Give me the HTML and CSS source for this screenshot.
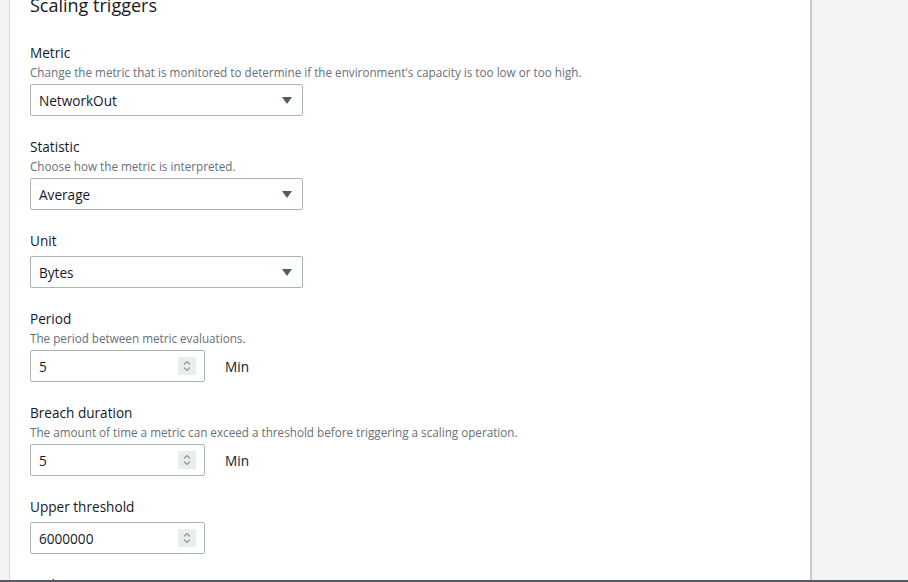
FILE: index.html
```html
<!DOCTYPE html>
<html lang="en">
<head>
<meta charset="utf-8">
<title>Scaling triggers</title>
<link rel="stylesheet" href="styles.css">
</head>
<body>
<div class="page">
  <div class="gutter"></div>
  <main class="panel">
    <h2 class="title">Scaling triggers</h2>

    <div class="field">
      <div class="label">Metric</div>
      <div class="desc">Change the metric that is monitored to determine if the environment's capacity is too low or too high.</div>
      <div class="select"><span>NetworkOut</span><svg class="caret" width="10" height="7" viewBox="0 0 10 7"><path d="M0 0h10L5 7z" fill="#545b64"/></svg></div>
    </div>

    <div class="field">
      <div class="label">Statistic</div>
      <div class="desc">Choose how the metric is interpreted.</div>
      <div class="select"><span>Average</span><svg class="caret" width="10" height="7" viewBox="0 0 10 7"><path d="M0 0h10L5 7z" fill="#545b64"/></svg></div>
    </div>

    <div class="field">
      <div class="label">Unit</div>
      <div class="select"><span>Bytes</span><svg class="caret" width="10" height="7" viewBox="0 0 10 7"><path d="M0 0h10L5 7z" fill="#545b64"/></svg></div>
    </div>

    <div class="field">
      <div class="label">Period</div>
      <div class="desc">The period between metric evaluations.</div>
      <div class="row">
        <div class="number"><span>5</span><span class="spin"><svg width="18" height="18" viewBox="0 0 18 18"><path d="M6 7.5 9 4.5 12 7.5M6 10.5 9 13.5 12 10.5" fill="none" stroke="#879596" stroke-width="1.2"/></svg></span></div>
        <span class="unit">Min</span>
      </div>
    </div>

    <div class="field">
      <div class="label">Breach duration</div>
      <div class="desc">The amount of time a metric can exceed a threshold before triggering a scaling operation.</div>
      <div class="row">
        <div class="number"><span>5</span><span class="spin"><svg width="18" height="18" viewBox="0 0 18 18"><path d="M6 7.5 9 4.5 12 7.5M6 10.5 9 13.5 12 10.5" fill="none" stroke="#879596" stroke-width="1.2"/></svg></span></div>
        <span class="unit">Min</span>
      </div>
    </div>

    <div class="field">
      <div class="label">Upper threshold</div>
      <div class="row">
        <div class="number"><span>6000000</span><span class="spin"><svg width="18" height="18" viewBox="0 0 18 18"><path d="M6 7.5 9 4.5 12 7.5M6 10.5 9 13.5 12 10.5" fill="none" stroke="#879596" stroke-width="1.2"/></svg></span></div>
      </div>
    </div>

    <div class="field">
      <div class="label">Scale up increment</div>
    </div>
  </main>
  <div class="aside"></div>
</div>
<div class="footer"></div>
</body>
</html>
```

FILE: styles.css
```css
* { box-sizing: border-box; }
html, body {
  margin: 0;
  height: 100%;
  overflow: hidden;
  background: #f2f3f3;
  font-family: "Open Sans", "Liberation Sans", sans-serif;
  color: #16191f;
}
.page {
  display: flex;
  height: 580px;
  overflow: hidden;
}
.gutter {
  width: 9px;
  flex: none;
  background: #f2f3f3;
}
.panel {
  width: 803px;
  flex: none;
  background: #fff;
  border-left: 1px solid #d5dbdb;
  border-right: 2px solid #c8cdcd;
  padding: 0 20px;
  overflow: hidden;
}
.aside {
  flex: 1;
  background: #f2f3f3;
}
.footer {
  height: 2px;
  background: #545b64;
}
.title {
  margin: -6px 0 25px;
  font-size: 18px;
  line-height: 22px;
  font-weight: 400;
}
.field { margin-bottom: 19px; }
.label {
  font-size: 13.6px;
  line-height: 22px;
  padding-top: 1px;
}
.desc {
  font-size: 11.7px;
  line-height: 15px;
  margin-top: 1px;
  color: #687078;
}
.select, .row { margin-top: 4px; }
.select {
  width: 273px;
  height: 32px;
  border: 1px solid #aab7b8;
  border-radius: 2px;
  display: flex;
  align-items: center;
  justify-content: space-between;
  padding: 0 10px 0 8px;
  font-size: 13.6px;
}
.row {
  display: flex;
  align-items: center;
  gap: 20px;
}
.number {
  width: 175px;
  height: 32px;
  border: 1px solid #aab7b8;
  border-radius: 2px;
  display: flex;
  align-items: center;
  justify-content: space-between;
  padding: 0 8px 0 8px;
  font-size: 13.6px;
}
.spin {
  width: 18px;
  height: 18px;
  background: #eaeded;
  display: block;
}
.spin svg { display: block; }
.unit { font-size: 13.6px; }
```
